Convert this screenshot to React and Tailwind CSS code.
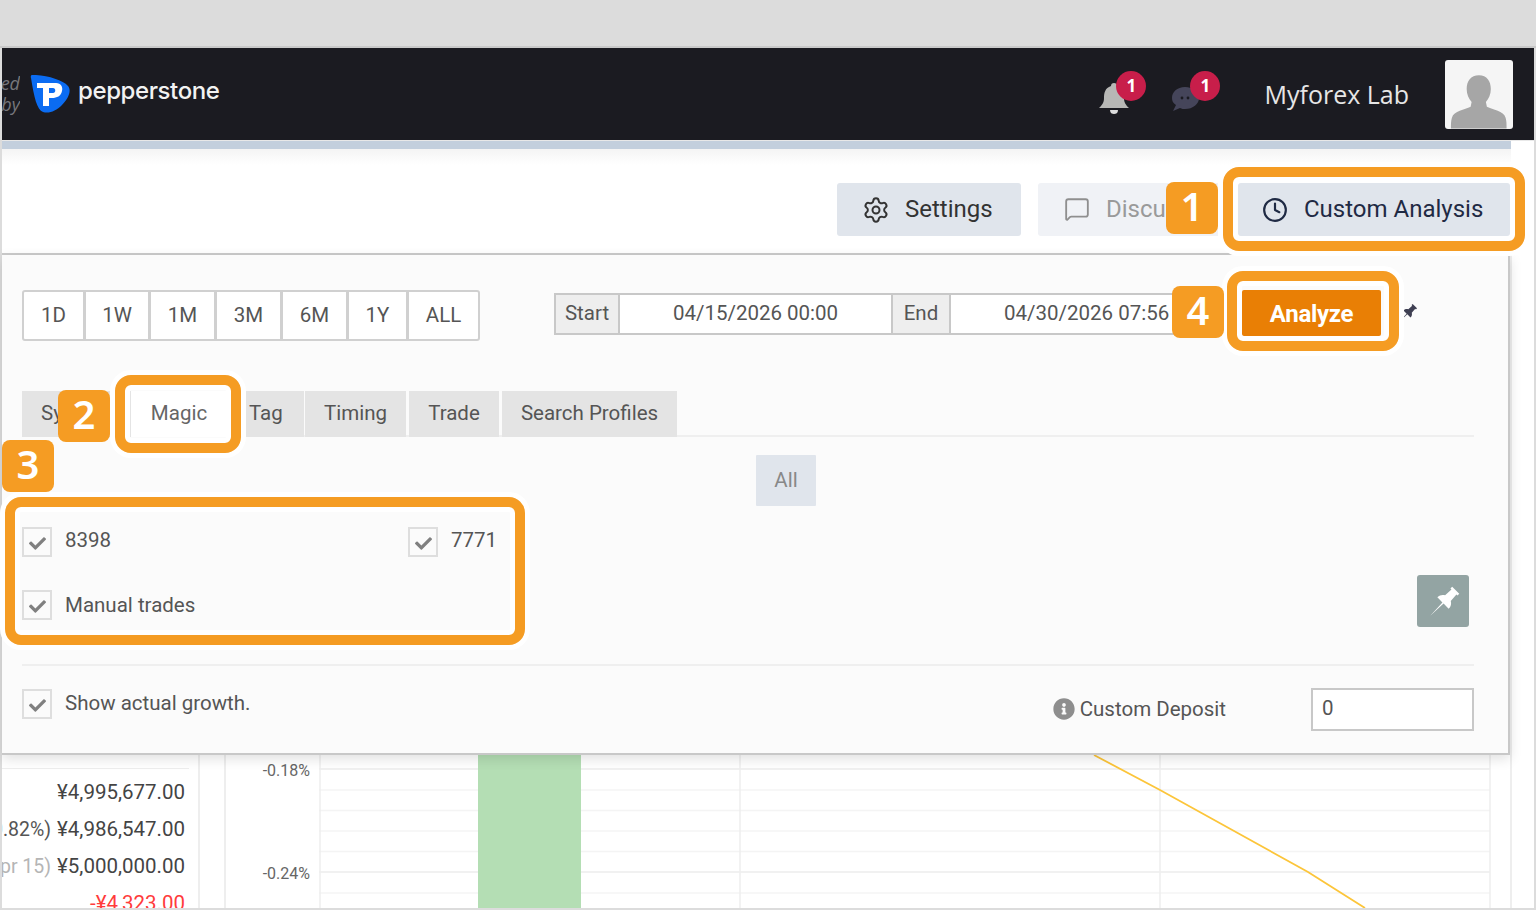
import React from "react";
import { Settings, Clock, MessageSquare } from "lucide-react";
import { FaCheck, FaInfoCircle } from "react-icons/fa";

function Callout({ className, children }) {
  return (
    <div className={"absolute w-[52px] h-[52px] rounded-[8px] bg-[#f59c23] text-white flex items-center justify-center pb-[4px] font-['Noto_Sans',sans-serif] font-semibold text-[40px] leading-none " + className}>
      {children}
    </div>
  );
}

function Frame({ className }) {
  return (
    <div className={"absolute border-[10px] border-[#f59c23] rounded-[16px] shadow-[0_0_0_5px_#ffffff,inset_0_0_0_5px_#ffffff] " + className} />
  );
}

function Pin({ className }) {
  return (
    <svg viewBox="0 0 26 26" className={"overflow-visible " + className}>
      <path
        transform="rotate(45 13 13)"
        d="M8 -5H18V-2.500H16.500L17 6C19.500 7.500 21 9.500 21 13H13.800L13 31L12.200 13H5C5 9.500 6.500 7.500 9 6L9.500 -2.500H8Z"
        fill="currentColor"
      />
    </svg>
  );
}

function Box({ label, className = "", textClass = "" }) {
  return (
    <div className={"flex items-start " + className}>
      <span className="w-[30px] h-[30px] border-2 border-[#dedede] bg-[#fbfbfb] flex items-center justify-center shrink-0">
        <FaCheck className="w-[17px] h-[17px] text-[#808080] mt-[2px]" />
      </span>
      <span className={"ml-[13px] text-[20.5px] leading-[26px] text-[#555555] " + textClass}>{label}</span>
    </div>
  );
}

const ranges = [
  ["1D", "w-[63px]"],
  ["1W", "w-[66px]"],
  ["1M", "w-[67px]"],
  ["3M", "w-[67px]"],
  ["6M", "w-[67px]"],
  ["1Y", "w-[61px]"],
  ["ALL", "w-[73px]"],
];

const tabs = [
  ["Symbol", "w-[109px] pl-[19px] justify-start"],
  ["Magic", "w-[96px] bg-white justify-center"],
  ["Tag", "w-[77px] pl-[22px] justify-start"],
  ["Timing", "w-[101px] justify-center ml-[1px]"],
  ["Trade", "w-[90px] justify-center ml-[3px]"],
  ["Search Profiles", "w-[175px] justify-center ml-[3px]"],
];

const values = [
  [null, "¥4,995,677.00", "text-[#444444]"],
  ["(-0.82%)", "¥4,986,547.00", "text-[#444444]"],
  ["(Apr 15)", "¥5,000,000.00", "text-[#444444]"],
  [null, "-¥4,323.00", "text-[#ff3b3b]"],
];

export default function App() {
  return (
    <div className="relative w-[1536px] h-[910px] overflow-hidden bg-[#dcdcdc] font-[Roboto,sans-serif]">
      <div className="h-[46px]" />
      <div className="h-[2px] bg-[#c9c9c9]" />
      <div className="ml-[2px] mr-[2px] h-[860px] bg-white flex flex-col overflow-hidden">
        {/* top bar */}
        <header className="h-[92px] shrink-0 bg-[#1b1b21] flex items-center relative overflow-hidden">
          <div className="w-[18px] overflow-hidden flex flex-col items-end italic text-[18px] leading-[21px] text-[#77777c] font-['Open_Sans',sans-serif] whitespace-nowrap">
            <span>ed</span>
            <span>by</span>
          </div>
          <svg viewBox="0 0 42 38" className="w-[42px] h-[38px] ml-[9px] mb-[1px]">
            <path d="M2 3 C1 0 3 -1 7 0 C20 1 34 5 39 11 C43 16 39 24 33 30 C27 36 20 39 14 37 C8 35 5 22 2 3Z" fill="#0b6cf2" />
            <path d="M8 8 H27 C32 8 34 12 33 16 C32 21 28 23 23 23 H20 V31 H14 V13 H8Z M20 13 V18 H24 C27 18 27 13 24 13Z" fill="#ffffff" fillRule="evenodd" />
          </svg>
          <span className="ml-[7px] text-[#f2f2f2] font-[Inter,sans-serif] font-medium text-[24px] leading-none tracking-[-0.4px] mb-[7px]">pepperstone</span>
          <div className="ml-auto flex items-center">
            <div className="relative w-[48px] h-[50px]">
              <svg viewBox="0 0 32 34" className="absolute left-[3px] top-[12px] w-[32px] h-[34px]">
                <path d="M16 2c2 0 3 1 3 3 6 2 7 7 7 12 0 5 2 7 5 10H1c3-3 5-5 5-10 0-5 1-10 7-12 0-2 1-3 3-3Z" fill="#b7b7b5" />
                <path d="M12 29h8c0 3-2 4-4 4s-4-1-4-4Z" fill="#dddddd" />
              </svg>
              <span className="absolute left-[21px] top-[2px] w-[30px] h-[30px] rounded-full bg-[#c81e4a] text-white flex items-center justify-center font-['Noto_Sans',sans-serif] font-bold text-[17px]">1</span>
            </div>
            <div className="relative w-[48px] h-[50px] ml-[26px]">
              <svg viewBox="0 0 32 30" className="absolute left-[2px] top-[14px] w-[32px] h-[30px]">
                <path d="M14 4c8 0 14 5 14 11s-6 11-14 11c-2 0-3 0-5-1l-7 3 3-6C2 20 1 18 1 15 1 9 6 4 14 4Z" fill="#45455a" />
                <circle cx="11" cy="15" r="1.400" fill="#1b1b21" />
                <circle cx="17" cy="15" r="1.400" fill="#1b1b21" />
              </svg>
              <span className="absolute left-[21px] top-[2px] w-[30px] h-[30px] rounded-full bg-[#c81e4a] text-white flex items-center justify-center font-['Noto_Sans',sans-serif] font-bold text-[17px]">1</span>
            </div>
            <span className="ml-[47px] text-[25px] text-[#e6e6e6] font-['Open_Sans',sans-serif] leading-none">Myforex Lab</span>
            <div className="ml-[36px] mr-[21px] w-[68px] h-[69px] rounded-[3px] bg-[#f5f5f5] overflow-hidden">
              <svg viewBox="0 0 69 69" className="w-full h-full">
                <path d="M34.500 15c8 0 12 6 12 14 0 5-2 10-5 13l1 5c6 3 17 4 19 11 1 3 1 7 1 11H6c0-4 0-8 1-11 2-7 13-8 19-11l1-5c-3-3-5-8-5-13 0-8 4-14 12.500-14Z" fill="#a6a6a6" />
              </svg>
            </div>
          </div>
        </header>

        <div className="h-px bg-[#e8e8e8] shrink-0" />
        <div className="h-[8px] w-[1509px] bg-[#c3cfdd] shrink-0" />

        {/* page toolbar */}
        <div className="h-[106px] shrink-0 w-[1509px] flex justify-end items-start pt-[34px] pr-px gap-[17px] border-b-2 border-[#cbcbcb] bg-gradient-to-b from-[#f4f4f4] to-white to-[15%]">
          <button className="w-[184px] h-[53px] rounded-[3px] bg-[#e0e5ec] flex items-center pl-[25px] pb-[2px] gap-[15px] text-[24px] text-[#333333]">
            <Settings size={28} strokeWidth={1.7} className="text-[#333333] mt-[2px]" />
            <span>Settings</span>
          </button>
          <button className="w-[183px] h-[53px] rounded-[3px] bg-[#f0f2f6] flex items-center pl-[26px] pb-[2px] gap-[16px] text-[24px] text-[#9a9a9a]">
            <MessageSquare size={26} strokeWidth={1.7} className="text-[#8f8f8f]" />
            <span>Discuss</span>
          </button>
          <button className="w-[272px] h-[53px] rounded-[3px] bg-[#e0e5ec] flex items-center pl-[24px] pb-[2px] gap-[16px] text-[24px] text-[#1f2a44]">
            <Clock size={26} strokeWidth={2} className="text-[#1f2a44] mt-[2px]" />
            <span>Custom Analysis</span>
          </button>
        </div>

        {/* content behind the panel */}
        <div className="flex h-[653px] shrink-0">
          <div className="w-[198px] border-r-2 border-[#eeeeee] pt-[513px] pr-[13px] overflow-hidden">
            <div className="h-px bg-[#eeeeee] mr-[-4px] mb-[5px]" />
            {values.map(([note, v, color]) => (
              <div key={v} className="h-[37px] flex justify-end items-center whitespace-nowrap text-[20.5px]">
                {note && <span className={(note === "(Apr 15)" ? "text-[#b5b5b5]" : "text-[#555555]") + " mr-[6px] text-[19.5px]"}>{note}</span>}
                <span className={color}>{v}</span>
              </div>
            ))}
          </div>
          <div className="w-[24px]" />
          <div className="w-[1288px] flex border-l-2 border-r-2 border-[#eeeeee]">
            <div className="w-[93px] shrink-0 pt-[506px] pr-[9px] text-right text-[16px] leading-[20px] text-[#666666]">
              <div>-0.18%</div>
              <div className="mt-[83px]">-0.24%</div>
            </div>
            <svg viewBox="0 0 1172 653" className="w-[1172px] h-[653px] shrink-0">
              {[514, 535, 555.5, 576, 596.5, 617, 638].map((y) => (
                <line key={y} x1="0" x2="1171" y1={y} y2={y} stroke={y === 514 || y === 617 ? "#ececec" : "#f4f4f4"} strokeWidth="1.500" />
              ))}
              {[1, 421, 841, 1171].map((x) => (
                <line key={x} x1={x} x2={x} y1="0" y2="653" stroke="#eeeeee" strokeWidth="1.500" />
              ))}
              <rect x="159" y="0" width="103" height="653" fill="#b4deb4" />
              <polyline points="775,500 841,535 989,617 1046,653" fill="none" stroke="#fcc53a" strokeWidth="1.800" />
            </svg>
          </div>
        </div>
      </div>

      {/* custom analysis panel */}
      <div className="absolute left-[2px] top-[255px] w-[1508px] h-[500px] bg-[#fbfbfb] border-r-2 border-b-2 border-[#c8c8c8] shadow-[0_4px_12px_rgba(0,0,0,0.12)] pl-[20px] pr-[34px] pt-[35px] text-[#555555]">
        <div className="flex items-start h-[51px]">
          <div className="flex h-[51px]">
            {ranges.map(([r, w]) => (
              <button key={r} className={w + " h-[51px] bg-white border-2 border-[#d0d0d0] -ml-px first:ml-0 first:rounded-l-[3px] last:rounded-r-[3px] text-[20.5px] text-[#555555]"}>{r}</button>
            ))}
          </div>
          <div className="flex h-[42px] mt-[3px] ml-[74px] text-[20.5px]">
            <span className="w-[66px] border-2 border-[#c8c8c8] bg-[#eeeeee] flex items-center justify-center pb-[2px]">Start</span>
            <span className="w-[273px] border-y-2 border-r-2 border-[#c8c8c8] bg-white flex items-center justify-center pb-[2px]">04/15/2026 00:00</span>
            <span className="w-[58px] border-y-2 border-r-2 border-[#c8c8c8] bg-[#eeeeee] flex items-center justify-center pb-[2px]">End</span>
            <span className="w-[240px] border-y-2 border-[#c8c8c8] bg-white flex items-center pl-[53px] pb-[2px] whitespace-nowrap">04/30/2026 07:56</span>
          </div>
          <button className="ml-[51px] w-[139px] h-[46px] pt-[2px] bg-[#e97f05] rounded-[2px] text-white font-bold text-[24px] tracking-[-0.3px] shrink-0">Analyze</button>
          <Pin className="ml-[18px] mt-[16px] w-[16px] h-[16px] text-[#3e3f52] shrink-0" />
        </div>

        <div className="mt-[50px] h-[46px] flex border-b-2 border-[#efefef]">
          {tabs.map(([t, c]) => (
            <div key={t} className={(t === "Magic" ? "text-[#666666] " : "bg-[#e4e4e4] ") + "h-[46px] flex items-center whitespace-nowrap text-[20.5px] pb-[2px] " + c}>{t}</div>
          ))}
        </div>

        <button className="block mt-[18px] ml-[734px] w-[60px] h-[51px] bg-[#e0e5ec] text-[#888888] text-[20.5px] rounded-[1px]">All</button>

        <div className="flex justify-between mt-[21px] h-[93px]">
          <div className="flex flex-col gap-[33px]">
            <div className="flex">
              <Box label="8398" className="w-[386px]" />
              <Box label="7771" />
            </div>
            <Box label="Manual trades" textClass="mt-[2px]" />
          </div>
          <button className="w-[52px] h-[52px] mt-[48px] mr-[5px] rounded-[3px] bg-[#93a4a3] flex items-center justify-center">
            <Pin className="w-[26px] h-[26px] text-white mt-[3px] mr-[1px]" />
          </button>
        </div>

        <div className="h-[2px] bg-[#efefef] mt-[44px]" />

        <div className="flex justify-between mt-[23px]">
          <Box label="Show actual growth." textClass="mt-px" />
          <div className="flex items-start">
            <FaInfoCircle className="w-[22px] h-[22px] mt-[9px] text-[#8e8e8e]" />
            <span className="ml-[5px] mt-[7px] text-[20.5px] leading-[26px]">Custom Deposit</span>
            <div className="ml-[85px] w-[163px] h-[43px] border-2 border-[#c8c8c8] bg-white pl-[9px] text-[20.5px] leading-[36px] -mt-px">0</div>
          </div>
        </div>
      </div>

      {/* annotations */}
      <Frame className="left-[1223px] top-[167px] w-[302px] h-[84px]" />
      <Frame className="left-[1227px] top-[271px] w-[172px] h-[80px]" />
      <Frame className="left-[115px] top-[375px] w-[126px] h-[78px]" />
      <Frame className="left-[5px] top-[497px] w-[520px] h-[148px]" />
      <Callout className="left-[1166px] top-[182px]">1</Callout>
      <Callout className="left-[58px] top-[390px]">2</Callout>
      <Callout className="left-[2px] top-[440px]">3</Callout>
      <Callout className="left-[1172px] top-[286px]">4</Callout>
    </div>
  );
}
